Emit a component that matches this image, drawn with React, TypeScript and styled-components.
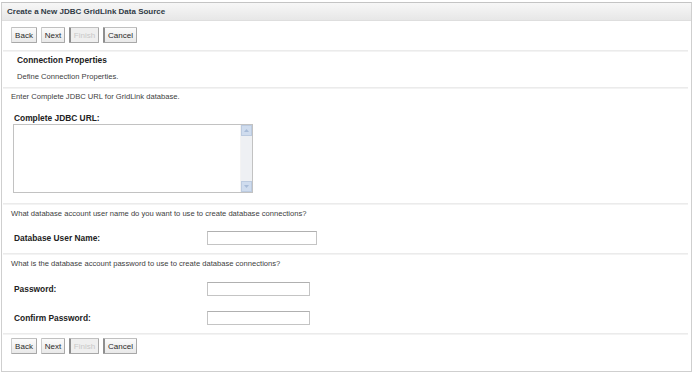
import React from 'react';
import styled, { createGlobalStyle } from 'styled-components';

const GlobalStyle = createGlobalStyle`
  html, body {
    margin: 0;
    padding: 0;
    background: #ffffff;
  }
  body {
    font-family: "Liberation Sans", Arial, sans-serif;
    font-size: 7.6px;
    color: #3a3a3a;
  }
`;

const Frame = styled.div`
  margin: 2px 0 0 1px;
  width: 689px;
  height: 368px;
  border: 1px solid #cfcfcf;
  border-top-color: #c4c4c4;
  display: flex;
  flex-direction: column;
`;

const TitleBar = styled.div`
  height: 17px;
  display: flex;
  align-items: center;
  padding-left: 5px;
  background: linear-gradient(#f7f7f7, #e7e7e7);
  border-bottom: 1px solid #dedede;
  font-weight: bold;
  font-size: 8px;
  color: #2f3a45;
`;

const Body = styled.div`
  flex: 1;
  display: flex;
  flex-direction: column;
  padding-right: 3px;
`;

const ButtonBar = styled.div<{ $h?: number; $pt: number }>`
  ${p => (p.$h ? `height: ${p.$h}px;` : 'flex: 1;')}
  display: flex;
  align-items: flex-start;
  gap: 4px;
  padding: ${p => p.$pt}px 0 0 9px;
  box-sizing: border-box;
`;

const Button = styled.button<{ $w: number; $disabled?: boolean }>`
  width: ${p => p.$w}px;
  height: 16px;
  padding: 0;
  font-family: "Liberation Sans", Arial, sans-serif;
  font-size: 8px;
  color: ${p => (p.$disabled ? '#c8c8c8' : '#2a2a2a')};
  background: ${p => (p.$disabled ? '#efefef' : 'linear-gradient(#fbfbfb, #e9e9e9)')};
  border: 1px solid #c0c0c0;
  border-right-color: #a8a8a8;
  border-bottom-color: #a8a8a8;
  border-left: ${p => (p.$disabled ? '2px solid #8f8f8f' : '1px solid #cccccc')};
  border-radius: 1px;
  cursor: default;
`;

const CancelButton = styled(Button)`
  border-left: 2px solid #8f8f8f;
`;

const Separator = styled.div`
  height: 2px;
  box-sizing: border-box;
  background: #ebebeb;
  border-bottom: 1px solid #f3f3f3;
  margin-left: 1px;
`;

const Line = styled.div<{ $h: number; $pt: number; $indent: number; $bold?: boolean }>`
  height: ${p => p.$h}px;
  box-sizing: border-box;
  padding: ${p => p.$pt}px 0 0 ${p => p.$indent}px;
  line-height: 10px;
  font-weight: ${p => (p.$bold ? 'bold' : 'normal')};
  font-size: ${p => (p.$bold ? '8.4px' : '7.6px')};
  color: ${p => (p.$bold ? '#222222' : '#404040')};
  white-space: nowrap;
`;

const UrlBlock = styled.div`
  height: 79px;
  padding-left: 11px;
`;

const TextAreaBox = styled.div`
  width: 238px;
  height: 67px;
  border: 1px solid #c2c2c2;
  display: flex;
`;

const UrlInput = styled.textarea`
  flex: 1;
  border: none;
  resize: none;
  outline: none;
  padding: 2px;
  font-family: "Liberation Sans", Arial, sans-serif;
  font-size: 8px;
  overflow: hidden;
`;

const ScrollBar = styled.div`
  width: 11px;
  display: flex;
  flex-direction: column;
  background: #eef0f3;
  border-left: 1px solid #f3f3f3;
`;

const ScrollArrow = styled.div`
  height: 11px;
  background: #cfdcee;
  border: 1px solid #bccbe0;
  box-sizing: border-box;
  display: flex;
  align-items: center;
  justify-content: center;
`;

const ScrollTrack = styled.div`
  flex: 1;
`;

const FieldRow = styled.div<{ $h: number; $pt: number }>`
  height: ${p => p.$h}px;
  box-sizing: border-box;
  display: grid;
  grid-template-columns: 193px auto;
  grid-template-rows: 14px;
  align-items: center;
  padding: ${p => p.$pt}px 0 0 12px;
`;

const FieldLabel = styled.span`
  font-weight: bold;
  font-size: 8.4px;
  color: #222222;
`;

const TextField = styled.input<{ $w: number }>`
  width: ${p => p.$w}px;
  height: 14px;
  box-sizing: border-box;
  border: 1px solid #c4c4c4;
  border-top-color: #b0b0b0;
  padding: 0 2px;
  font-size: 8px;
  outline: none;
`;

const Arrow = ({ up }: { up?: boolean }) => (
  <svg width="5" height="3" viewBox="0 0 5 3">
    <path d={up ? 'M0 3 L2.5 0 L5 3 Z' : 'M0 0 L2.5 3 L5 0 Z'} fill="#a8bcd8" />
  </svg>
);

function Buttons({ h, pt }: { h?: number; pt: number }) {
  return (
    <ButtonBar $h={h} $pt={pt}>
      <Button $w={26}>Back</Button>
      <Button $w={24}>Next</Button>
      <Button $w={30} $disabled disabled>Finish</Button>
      <CancelButton $w={34}>Cancel</CancelButton>
    </ButtonBar>
  );
}

export default function App() {
  return (
    <>
      <GlobalStyle />
      <Frame>
        <TitleBar>Create a New JDBC GridLink Data Source</TitleBar>
        <Body>
          <Buttons h={29} pt={6} />
          <Separator />
          <Line $h={15} $pt={3} $indent={15} $bold>Connection Properties</Line>
          <Line $h={20} $pt={5} $indent={15}>Define Connection Properties.</Line>
          <Separator />
          <Line $h={16} $pt={3} $indent={9}>Enter Complete JDBC URL for GridLink database.</Line>
          <Line $h={19} $pt={8} $indent={12} $bold>Complete JDBC URL:</Line>
          <UrlBlock>
            <TextAreaBox>
              <UrlInput />
              <ScrollBar>
                <ScrollArrow><Arrow up /></ScrollArrow>
                <ScrollTrack />
                <ScrollArrow><Arrow /></ScrollArrow>
              </ScrollBar>
            </TextAreaBox>
          </UrlBlock>
          <Separator />
          <Line $h={20} $pt={4} $indent={9}>What database account user name do you want to use to create database connections?</Line>
          <FieldRow $h={28} $pt={6}>
            <FieldLabel>Database User Name:</FieldLabel>
            <TextField $w={110} />
          </FieldRow>
          <Separator />
          <Line $h={20} $pt={4} $indent={9}>What is the database account password to use to create database connections?</Line>
          <FieldRow $h={29} $pt={7}>
            <FieldLabel>Password:</FieldLabel>
            <TextField $w={103} type="password" />
          </FieldRow>
          <FieldRow $h={29} $pt={7}>
            <FieldLabel>Confirm Password:</FieldLabel>
            <TextField $w={103} type="password" />
          </FieldRow>
          <Separator />
          <Buttons pt={3} />
        </Body>
      </Frame>
    </>
  );
}
